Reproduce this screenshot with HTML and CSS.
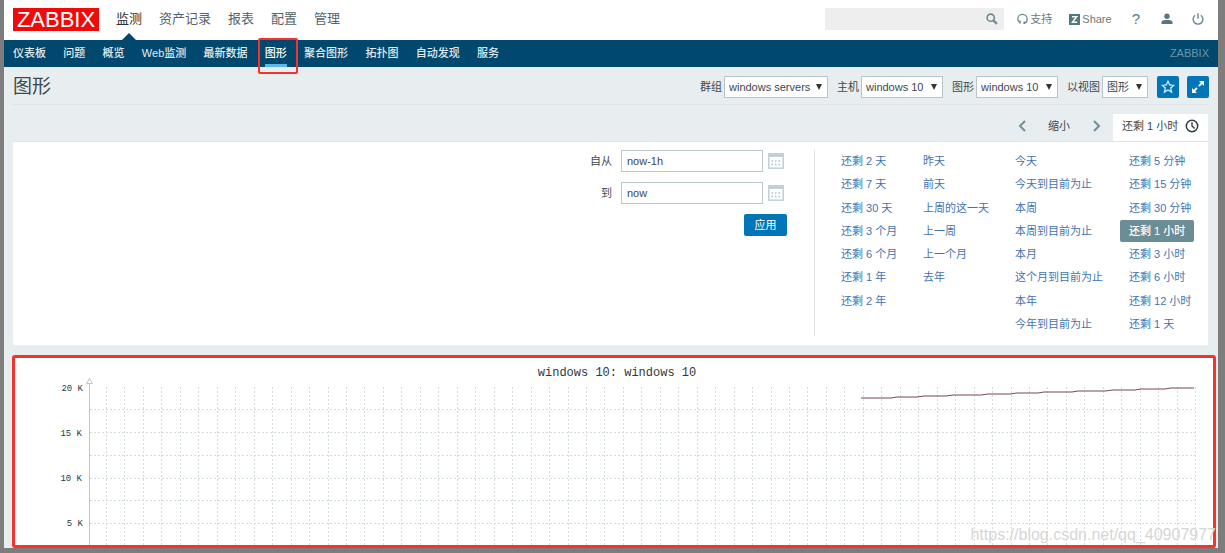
FILE: index.html
```html
<!DOCTYPE html>
<html lang="zh-CN">
<head>
<meta charset="utf-8">
<title>ZABBIX 图形</title>
<link rel="stylesheet" href="styles.css">
</head>
<body>
<div class="page">
  <header class="top">
    <a class="logo" href="#">ZABBIX</a>
    <nav class="main-menu">
      <a class="current" href="#">监测</a><a href="#">资产记录</a><a href="#">报表</a><a href="#">配置</a><a href="#">管理</a>
    </nav>
    <div class="search">
      <input type="text" aria-label="搜索">
      <button type="button" aria-label="搜索"><svg width="12" height="12" viewBox="0 0 12 12"><circle cx="4.7" cy="4.7" r="3.6" fill="none" stroke="#6f8a90" stroke-width="1.6"/><path d="M7.4 7.4 11 11" stroke="#6f8a90" stroke-width="2.2"/></svg></button>
    </div>
    <a class="tool support" href="#"><svg width="11" height="12" viewBox="0 0 12 12"><path d="M3.500 10C1.500 9 .9 7.500.9 6a5.100 5.100 0 0 1 10.200 0c0 2.500-.6 3.900-3.300 4.700" fill="none" stroke="#66868c" stroke-width="1.400"/><path d="M2.500 7.500h1.500v3.300H2.500zM7 9h1.800v2.400H7z" fill="#66868c"/></svg>支持</a>
    <a class="tool share" href="#"><svg width="11" height="11" viewBox="0 0 11 11"><rect width="11" height="11" fill="#4f7b80"/><path d="M3 2.800h4.600L3.500 8.200H8.200" fill="none" stroke="#fff" stroke-width="1.500"/></svg>Share</a>
    <a class="tool help" href="#">?</a>
    <a class="tool user" href="#" aria-label="用户"><svg width="12" height="12" viewBox="0 0 12 12"><circle cx="6" cy="3.300" r="2.700" fill="#56777e"/><path d="M.5 11V9.500C.5 7.500 3 7 6 7s5.500.5 5.500 2.500V11z" fill="#56777e"/></svg></a>
    <a class="tool" href="#" aria-label="退出"><svg width="12" height="12" viewBox="0 0 12 12"><path d="M3.200 2.200a4.900 4.900 0 1 0 5.600 0M6 .3v5.500" fill="none" stroke="#6b878d" stroke-width="1.400"/></svg></a>
  </header>

  <nav class="sub">
    <div class="sub-menu">
      <a href="#">仪表板</a><a href="#">问题</a><a href="#">概览</a><a href="#">Web监测</a><a href="#">最新数据</a><a class="active" href="#">图形</a><a href="#">聚合图形</a><a href="#">拓扑图</a><a href="#">自动发现</a><a href="#">服务</a>
    </div>
    <span class="server">ZABBIX</span>
  </nav>

  <main>
    <div class="title-row">
      <h1>图形</h1>
      <form class="filters">
        <label for="group">群组</label><span class="pick group"><select id="group"><option>windows servers</option></select></span>
        <label for="host">主机</label><span class="pick host"><select id="host"><option>windows 10</option></select></span>
        <label for="graph">图形</label><span class="pick host"><select id="graph"><option>windows 10</option></select></span>
        <label for="view">以视图</label><span class="pick view"><select id="view"><option>图形</option></select></span>
        <button class="square" type="button" aria-label="收藏"><svg width="14" height="14" viewBox="0 0 14 14"><path d="M7 1.300 8.700 5l4 .4-3 2.700.9 4L7 10l-3.600 2.100.9-4-3-2.700 4-.4z" fill="none" stroke="#d6efff" stroke-width="1.300"/></svg></button>
        <button class="square" type="button" aria-label="全屏"><svg width="14" height="14" viewBox="0 0 14 14"><path d="M8 1h5v5zM1 8v5h5z" fill="#fff"/><path d="M7.800 6.200 11 3M3 11l3-3" stroke="#fff" stroke-width="1.800"/></svg></button>
      </form>
    </div>

    <div class="time-nav">
      <button type="button" aria-label="向前"><svg width="8" height="12" viewBox="0 0 8 12"><path d="M7 1 2 6l5 5" fill="none" stroke="#728e98" stroke-width="2"/></svg></button>
      <button class="zoom" type="button">缩小</button>
      <button type="button" aria-label="向后"><svg width="8" height="12" viewBox="0 0 8 12"><path d="m1 1 5 5-5 5" fill="none" stroke="#728e98" stroke-width="2"/></svg></button>
      <button class="tab" type="button">还剩 1 小时<svg width="14" height="14" viewBox="0 0 14 14"><circle cx="7" cy="7" r="5.700" fill="none" stroke="#303c40" stroke-width="1.500"/><path d="M7 3.200V7l2.600 2.500" fill="none" stroke="#303c40" stroke-width="1.400"/></svg></button>
    </div>

    <section class="panel">
      <form class="range">
        <div class="field"><label for="from">自从</label><input id="from" type="text" value="now-1h"><button class="cal" type="button" aria-label="选择日期"><svg width="16" height="16" viewBox="0 0 16 16"><rect x=".8" y=".8" width="14.400" height="14.400" fill="#fff" stroke="#c4cfd2" stroke-width="1.500"/><path d="M0 0h16v4H0z" fill="#c4cfd2"/><path d="M3.500 8h9M3.500 11.500h9" stroke="#b4c0c4" stroke-width="1.500" stroke-dasharray="1.500 2"/></svg></button></div>
        <div class="field"><label for="to">到</label><input id="to" type="text" value="now"><button class="cal" type="button" aria-label="选择日期"><svg width="16" height="16" viewBox="0 0 16 16"><rect x=".8" y=".8" width="14.400" height="14.400" fill="#fff" stroke="#c4cfd2" stroke-width="1.500"/><path d="M0 0h16v4H0z" fill="#c4cfd2"/><path d="M3.500 8h9M3.500 11.500h9" stroke="#b4c0c4" stroke-width="1.500" stroke-dasharray="1.500 2"/></svg></button></div>
        <button class="apply" type="button">应用</button>
      </form>
      <div class="presets">
        <ul><li><a href="#">还剩 2 天</a></li><li><a href="#">还剩 7 天</a></li><li><a href="#">还剩 30 天</a></li><li><a href="#">还剩 3 个月</a></li><li><a href="#">还剩 6 个月</a></li><li><a href="#">还剩 1 年</a></li><li><a href="#">还剩 2 年</a></li></ul>
        <ul><li><a href="#">昨天</a></li><li><a href="#">前天</a></li><li><a href="#">上周的这一天</a></li><li><a href="#">上一周</a></li><li><a href="#">上一个月</a></li><li><a href="#">去年</a></li></ul>
        <ul><li><a href="#">今天</a></li><li><a href="#">今天到目前为止</a></li><li><a href="#">本周</a></li><li><a href="#">本周到目前为止</a></li><li><a href="#">本月</a></li><li><a href="#">这个月到目前为止</a></li><li><a href="#">本年</a></li><li><a href="#">今年到目前为止</a></li></ul>
        <ul><li><a href="#">还剩 5 分钟</a></li><li><a href="#">还剩 15 分钟</a></li><li><a href="#">还剩 30 分钟</a></li><li><a class="chosen" href="#">还剩 1 小时</a></li><li><a href="#">还剩 3 小时</a></li><li><a href="#">还剩 6 小时</a></li><li><a href="#">还剩 12 小时</a></li><li><a href="#">还剩 1 天</a></li></ul>
      </div>
    </section>

    <section class="graph">
      <svg class="chart" viewBox="0 0 1198 187" role="img" aria-label="windows 10: windows 10">
        <path class="grid" d="M91.500 29v158M109.500 29v158M128.500 29v158M146.500 29v158M165.500 29v158M183.500 29v158M202.500 29v158M220.500 29v158M239.500 29v158M257.500 29v158M276.500 29v158M294.500 29v158M313.500 29v158M331.500 29v158M349.500 29v158M368.500 29v158M386.500 29v158M405.500 29v158M423.500 29v158M442.500 29v158M460.500 29v158M479.500 29v158M497.500 29v158M516.500 29v158M534.500 29v158M553.500 29v158M571.500 29v158M589.500 29v158M608.500 29v158M626.500 29v158M645.500 29v158M663.500 29v158M682.500 29v158M700.500 29v158M719.500 29v158M737.500 29v158M756.500 29v158M774.500 29v158M792.500 29v158M811.500 29v158M829.500 29v158M848.500 29v158M866.500 29v158M885.500 29v158M903.500 29v158M922.500 29v158M940.500 29v158M959.500 29v158M977.500 29v158M996.500 29v158M1014.500 29v158M1032.500 29v158M1051.500 29v158M1069.500 29v158M1088.500 29v158M1106.500 29v158M1125.500 29v158M1143.500 29v158M1162.500 29v158M1180.500 29v158"/>
        <path class="grid" d="M75 51.500h1105M75 74.500h1105M75 97.500h1105M75 120.500h1105M75 142.500h1105M75 165.500h1105"/>
        <path class="axis" d="M74.500 25v162"/>
        <path class="arrow" d="m74.500 20.500 3 5h-6z"/>
        <path class="series" d="M846 40h30l6-1h20l7-1h22l7-1h28l7-1h22l7-1h21l6-1h28l6-1h27l8-1h22l6-1h24l6-1h23"/>
        <text class="graph-title" x="602" y="18">windows 10: windows 10</text>
        <g class="ticks"><text x="68" y="33">20 K</text><text x="67" y="78">15 K</text><text x="67" y="123">10 K</text><text x="68" y="168">5 K</text></g>
      </svg>
    </section>
  </main>
  <span class="watermark">https://blog.csdn.net/qq_40907977</span>
</div>
</body>
</html>
```
FILE: styles.css
```css
* { box-sizing: border-box; }

body {
  margin: 0;
  background: #7d7d7d;
  color: #3c484c;
  font: 11px/16px "Liberation Sans", "Noto Sans CJK SC", sans-serif;
}

a { color: inherit; text-decoration: none; }
button, input, select { font: inherit; color: inherit; }
button { padding: 0; border: 0; background: none; }
svg { display: block; flex: none; }

.page {
  position: relative;
  margin: 0 7px 5px 4px;
  background: #e8edef;
}

.top {
  display: flex;
  align-items: center;
  height: 40px;
  padding: 0 14px 2px 9px;
  background: #fff;
}

.logo {
  width: 86px;
  background: #f00a0a;
  color: #fff;
  font-size: 22px;
  line-height: 23px;
  text-align: center;
}

.main-menu {
  display: flex;
  gap: 17px;
  margin: 0 auto 0 17px;
  color: #54636a;
  font-size: 13px;
  line-height: 38px;
}

.main-menu .current { position: relative; color: #243238; }

.main-menu .current::after {
  content: "";
  position: absolute;
  bottom: -2px;
  left: 50%;
  margin-left: -7px;
  border: solid transparent;
  border-width: 0 7px 7px;
  border-bottom-color: #00486d;
}

.search {
  display: flex;
  align-items: center;
  width: 179px;
  height: 22px;
  margin-right: 13px;
  padding-right: 6px;
  background: #eee;
}

.search input {
  flex: 1;
  min-width: 0;
  border: 0;
  background: none;
}

.tool {
  display: flex;
  align-items: center;
  gap: 2px;
  color: #6b7b80;
}

.share { margin: 0 20px 0 17px; }
.help { margin-right: 21px; font-size: 15px; color: #587980; }
.user { margin-right: 19px; }

.sub {
  display: flex;
  justify-content: space-between;
  height: 27px;
  padding: 0 9px;
  background: #00486d;
  color: #e0ebf0;
  line-height: 26px;
}

.sub-menu {
  display: flex;
  justify-content: space-between;
  width: 486px;
  font-weight: 500;
}

.sub-menu .active {
  position: relative;
  border-bottom: 3px solid #5cb8e8;
  color: #fff;
}

.sub-menu .active::after {
  content: "";
  position: absolute;
  inset: -2px -11px -10px -7px;
  border: 2px solid #f5322b;
  border-radius: 2px;
}

.server { color: #6e94a8; }

main { padding: 0 2px 0 8px; }

.title-row {
  display: flex;
  justify-content: space-between;
  align-items: center;
  height: 38px;
  margin: 0 7px 0 1px;
  padding-top: 2px;
  border-bottom: 1px solid #dde3e6;
}

h1 {
  margin: 0;
  font-size: 19px;
  font-weight: 400;
  line-height: 24px;
}

.filters { display: flex; align-items: center; }
.filters label { margin-right: 2px; }

.pick { position: relative; margin-right: 9px; }

.pick::after {
  content: "";
  position: absolute;
  top: 8px;
  right: 6px;
  border: solid transparent;
  border-width: 6px 3px 0;
  border-top-color: #333;
  pointer-events: none;
}

.pick select {
  display: block;
  width: 100%;
  height: 22px;
  padding: 0 4px;
  border: 1px solid #b8c4c8;
  border-radius: 0;
  background: #fff;
  appearance: none;
}

.group { width: 104px; }
.host { width: 82px; }
.view { width: 46px; }

.square {
  display: grid;
  place-items: center;
  width: 22px;
  height: 22px;
  border-radius: 2px;
  background: #0275b8;
}

.square + .square { margin-left: 8px; }

.time-nav {
  display: flex;
  justify-content: flex-end;
  align-items: center;
  height: 36px;
  padding: 9px 8px 0 0;
}

.time-nav > button { margin-bottom: 4px; }
.time-nav .zoom { margin: 0 23px 4px 22px; }

.time-nav .tab {
  display: flex;
  align-items: center;
  justify-content: space-between;
  align-self: stretch;
  width: 95px;
  margin: 0 0 0 12px;
  padding: 0 9px 4px;
  background: #fff;
}

.panel {
  display: flex;
  justify-content: flex-end;
  margin: 0 8px 10px 1px;
  padding: 8px 15px 9px;
  border-top: 1px solid #dde3e6;
  background: #fff;
}

.range {
  display: flex;
  flex-direction: column;
  align-items: flex-end;
  gap: 10px;
  margin-right: 27px;
}

.field { display: flex; align-items: center; }

.field input {
  width: 142px;
  height: 22px;
  margin: 0 5px 0 9px;
  padding: 0 5px;
  border: 1px solid #b9c9cb;
}

.cal { margin-right: 3px; }

.apply {
  width: 43px;
  height: 22px;
  border-radius: 2px;
  background: #0275b8;
  color: #fff;
}

.presets {
  display: grid;
  grid-template-columns: 82px 92px 114px 73px;
  padding-left: 17px;
  border-left: 1px solid #dde3e6;
  color: #4373ad;
  white-space: nowrap;
}

.presets ul {
  display: grid;
  grid-template-rows: repeat(8, 1fr);
  min-height: 186px;
  margin: 0;
  padding: 0;
  list-style: none;
}

.presets a {
  display: block;
  width: fit-content;
  padding: 0 9px;
  line-height: 22px;
}

.presets .chosen {
  border-radius: 2px;
  background: #6b8d96;
  color: #fff;
  font-weight: 500;
}

.graph {
  border: 3px solid #f5322b;
  border-radius: 3px;
  background: #fff;
}

.chart { width: 100%; }

.grid {
  fill: none;
  stroke: #d3dcdc;
  stroke-dasharray: 2 2;
}

.axis { stroke: #bcc8ca; }
.arrow { fill: #fff; stroke: #bcc8ca; }
.series { fill: none; stroke: #74484f; }
.chart text { fill: #30383a; font-family: "Liberation Mono", monospace; }
.graph-title { font-size: 12px; text-anchor: middle; }
.ticks { font-size: 9px; text-anchor: end; }

.watermark {
  position: absolute;
  right: 2px;
  bottom: 4px;
  color: #d6d6d6;
  font-size: 16px;
  line-height: 18px;
}
```
